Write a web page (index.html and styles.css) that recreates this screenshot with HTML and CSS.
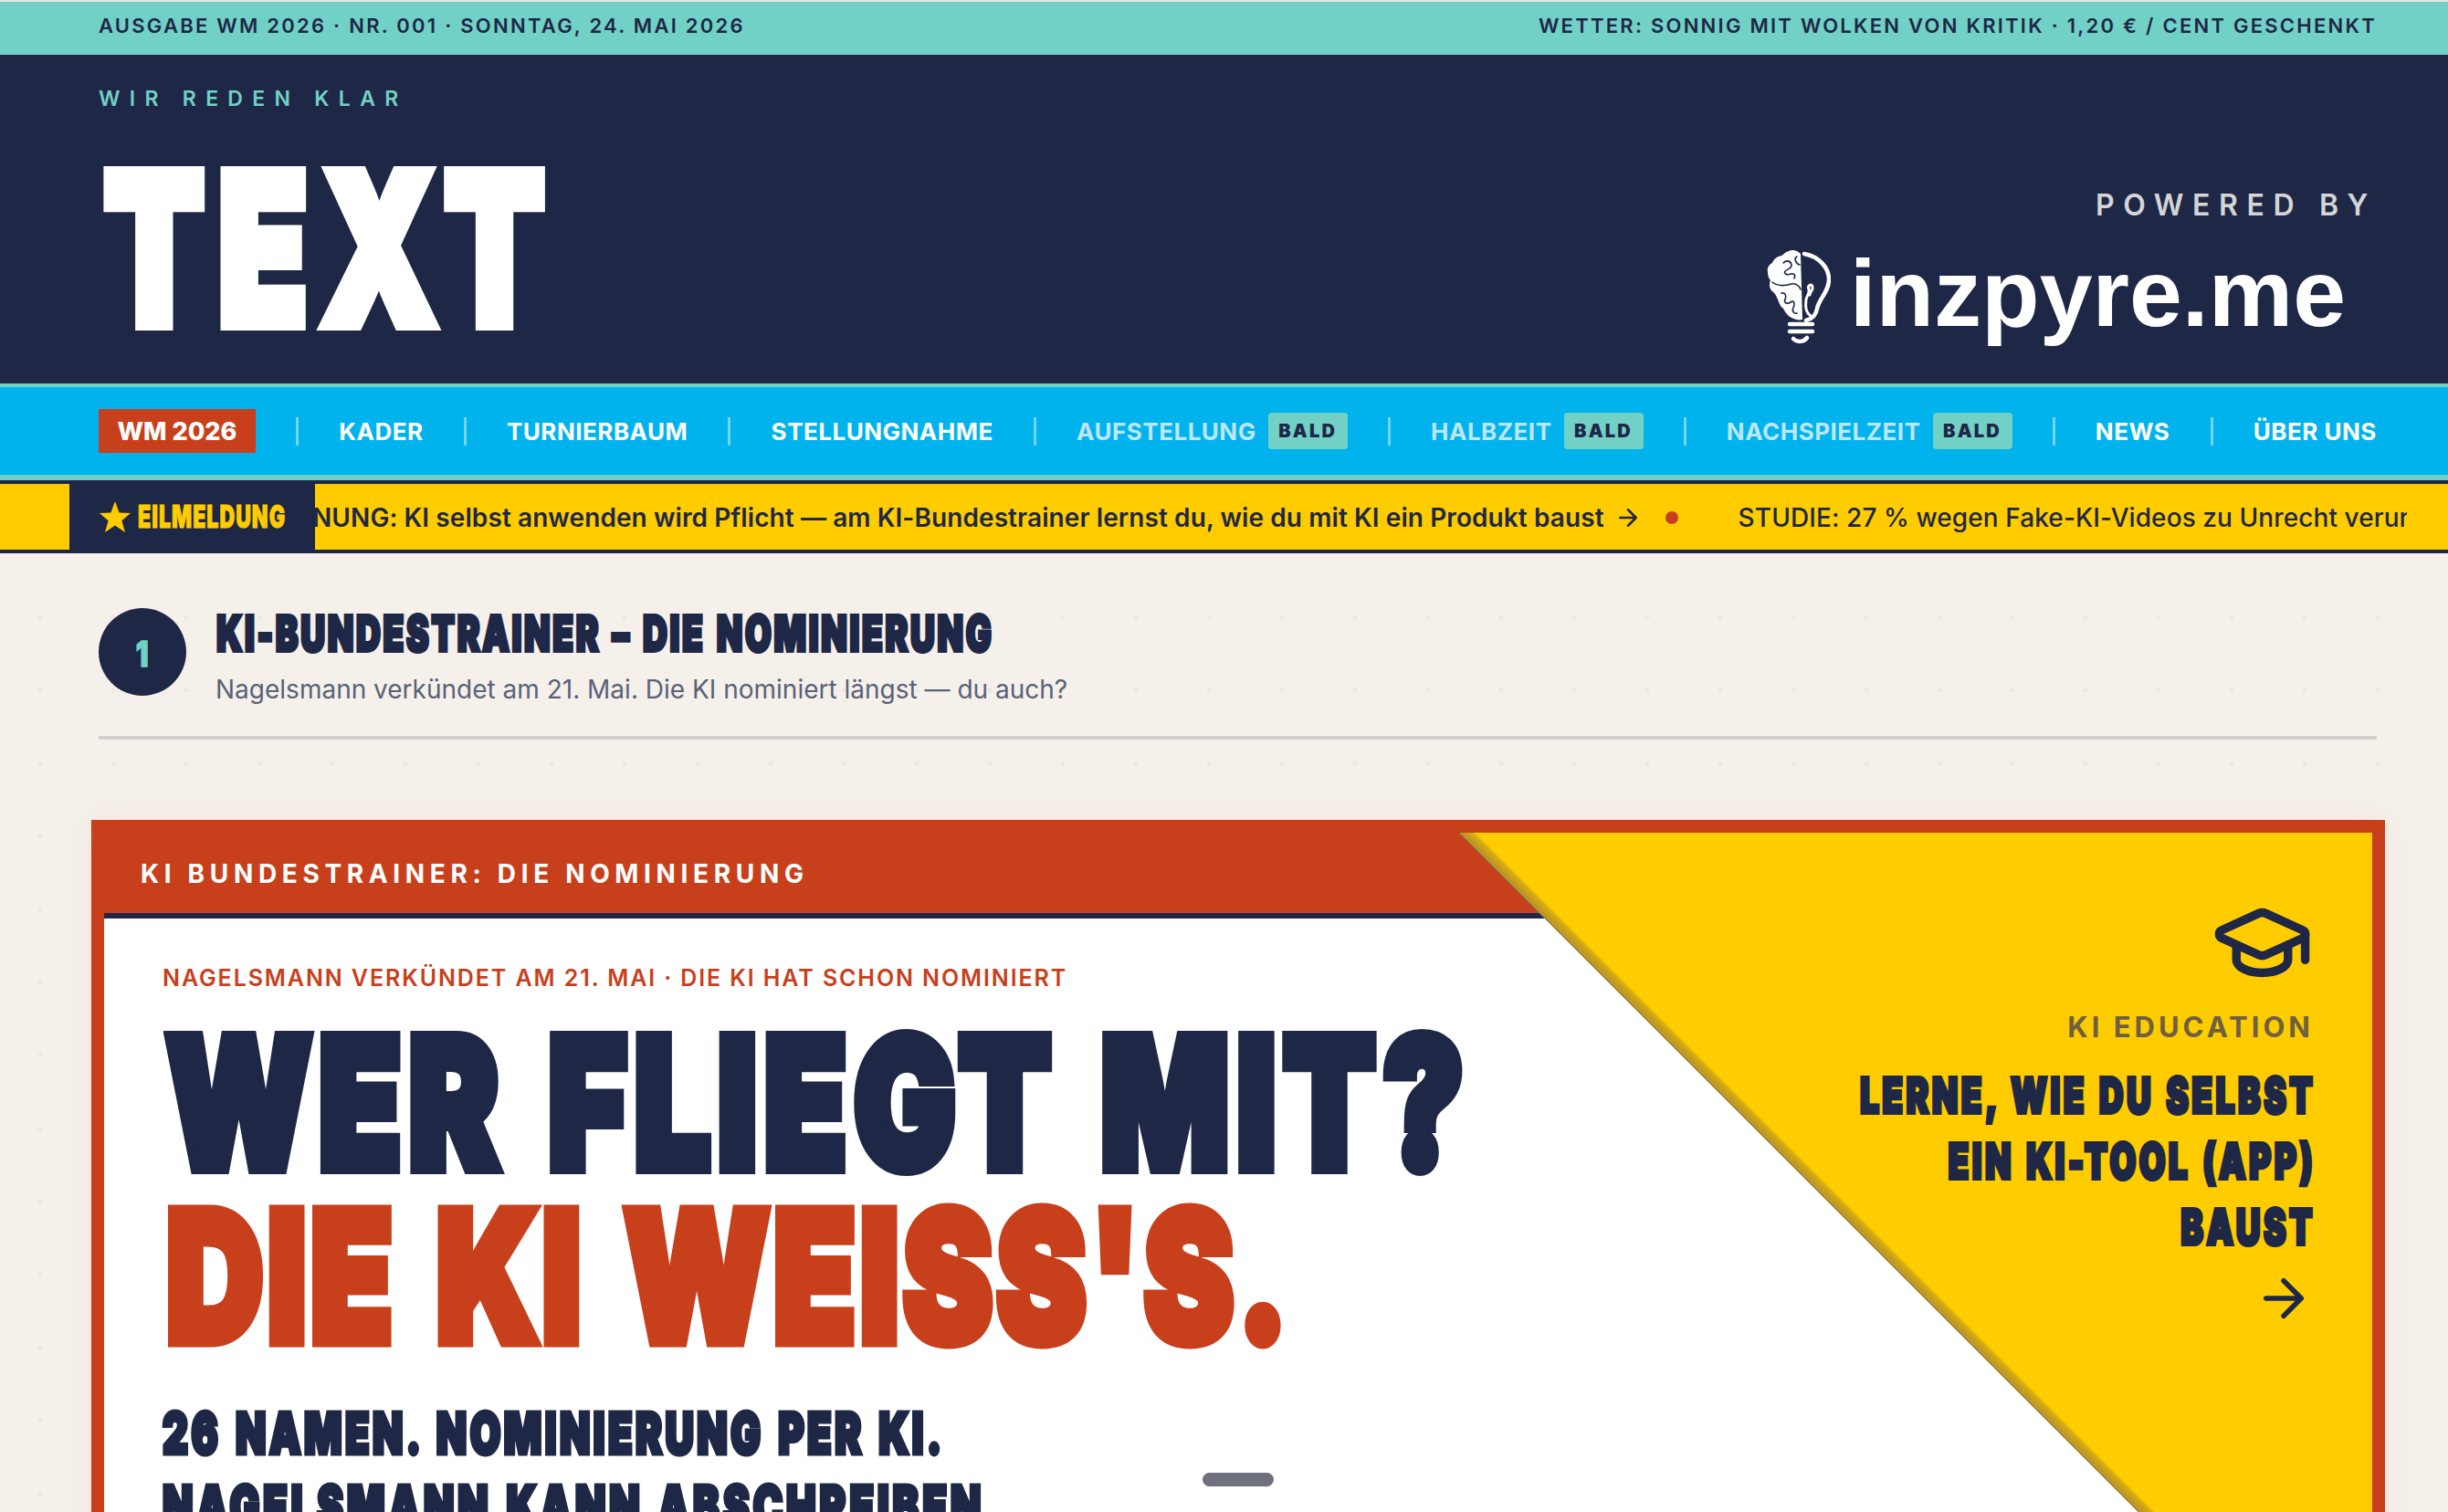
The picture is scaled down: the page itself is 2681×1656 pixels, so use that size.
FILE: index.html
```html
<!DOCTYPE html>
<html lang="de">
<head>
<meta charset="utf-8">
<title>TEXT – WM 2026</title>
<link rel="stylesheet" href="styles.css">
</head>
<body>
<div class="strip">
  <span>AUSGABE WM 2026 · NR. 001 · SONNTAG, 24. MAI 2026</span>
  <span>WETTER: SONNIG MIT WOLKEN VON KRITIK · 1,20 € / CENT GESCHENKT</span>
</div>
<header class="masthead">
  <div class="brand">
    <div class="tagline">WIR REDEN KLAR</div>
    <div class="logo cond">TEXT</div>
  </div>
  <div class="powered">
    <div class="powered-label">POWERED BY</div>
    <div class="powered-logo">
      <svg class="bulb" viewBox="0 0 70 104" width="70" height="104" aria-hidden="true">
        <path class="bulb-brain" d="M37 5C33 1 28 0 24 2C20 3 18 6 16 7C10 8 7 12 6 15C2 17 0 21 1 25C1 29 2 32 4 34C2 38 3 44 6 46C8 47 10 50 12 55C14 60 15 63 18 65C20 69 23 73 27 75C31 77 35 78 39 77Z"/>
        <g class="bulb-lines">
          <path d="M18 15C22 11 27 13 27 18C27 21 22 22 20 24C18 26 22 29 26 27C29 26 32 28 30 32"/>
          <path d="M6 36C12 41 20 40 27 38C31 37 36 40 37 44"/>
          <path d="M33 8C29 10 32 16 36 17"/>
          <path d="M16 48C20 47 22 51 20 55C18 58 22 61 26 58C30 55 31 60 29 64C27 68 30 71 33 70"/>
        </g>
        <path class="bulb-stroke" d="M41 5C58 8 68 21 68 33C68 47 57 54 55 65C54 72 50 76 43 78"/>
        <path class="bulb-stroke thin" d="M48 73C43 70 42 62 43 55C44 50 47 49 46 44C44 40 49 37 50 41C51 45 47 46 47 50"/>
        <path class="bulb-stroke" d="M25 82H50M25 90H50M29 98C33 102 40 102 44 97"/>
      </svg>
      <span class="powered-name">inzpyre.me</span>
    </div>
  </div>
</header>
<nav class="nav">
  <a class="nav-chip">WM 2026</a>
  <i class="sep"></i>
  <a class="nav-item">KADER</a>
  <i class="sep"></i>
  <a class="nav-item">TURNIERBAUM</a>
  <i class="sep"></i>
  <a class="nav-item">STELLUNGNAHME</a>
  <i class="sep"></i>
  <a class="nav-item muted">AUFSTELLUNG <b class="soon">BALD</b></a>
  <i class="sep"></i>
  <a class="nav-item muted">HALBZEIT <b class="soon">BALD</b></a>
  <i class="sep"></i>
  <a class="nav-item muted">NACHSPIELZEIT <b class="soon">BALD</b></a>
  <i class="sep"></i>
  <a class="nav-item">NEWS</a>
  <i class="sep"></i>
  <a class="nav-item">ÜBER UNS</a>
</nav>
<div class="ticker">
  <div class="ticker-label">
    <svg class="star" viewBox="0 0 36 36" width="36" height="36" aria-hidden="true"><path d="M18 1l4.6 12.4L35 14l-9.6 8.2L29 35 18 27.6 7 35l3.6-12.8L1 14l12.4-.6z"/></svg>
    <span class="cond ticker-word">EILMELDUNG</span>
  </div>
  <div class="ticker-track">
    <span class="ticker-main">NUNG: KI selbst anwenden wird Pflicht — am KI-Bundestrainer lernst du, wie du mit KI ein Produkt baust</span>
    <svg class="ticker-arrow" viewBox="0 0 24 24" aria-hidden="true"><path d="M5 12h14M12 5l7 7-7 7"/></svg>
    <i class="ticker-dot"></i>
    <span class="ticker-next">STUDIE: 27 % wegen Fake-KI-Videos zu Unrecht verurteilt</span>
  </div>
</div>
<main class="page">
  <section class="section-head">
    <div class="badge"><span class="cond badge-num">1</span></div>
    <div class="section-text">
      <h2 class="cond section-title">KI-BUNDESTRAINER – DIE NOMINIERUNG</h2>
      <p class="section-sub">Nagelsmann verkündet am 21. Mai. Die KI nominiert längst — du auch?</p>
    </div>
  </section>
  <article class="card">
    <div class="card-head">KI BUNDESTRAINER: DIE NOMINIERUNG</div>
    <div class="card-body">
      <div class="kicker">NAGELSMANN VERKÜNDET AM 21. MAI · DIE KI HAT SCHON NOMINIERT</div>
      <h1 class="hero">
        <span class="cond hero-line line-a">WER FLIEGT MIT?</span>
        <span class="cond hero-line line-b">DIE KI WEISS'S.</span>
      </h1>
      <p class="sub">
        <span class="cond sub-line sub-a">26 NAMEN. NOMINIERUNG PER KI.</span>
        <span class="cond sub-line sub-b">NAGELSMANN KANN ABSCHREIBEN</span>
      </p>
    </div>
    <aside class="corner">
      <svg class="cap" viewBox="0 0 24 24" aria-hidden="true">
        <path d="M21.42 10.922a1 1 0 0 0-.019-1.838L12.83 5.18a2 2 0 0 0-1.66 0L2.6 9.08a1 1 0 0 0 0 1.832l8.57 3.908a2 2 0 0 0 1.66 0z"/>
        <path d="M22 10v6"/>
        <path d="M6 12.5V16a6 3 0 0 0 12 0v-3.5"/>
      </svg>
      <div class="corner-label">KI EDUCATION</div>
      <div class="corner-title">
        <span class="cond corner-line">LERNE, WIE DU SELBST</span>
        <span class="cond corner-line">EIN KI-TOOL (APP)</span>
        <span class="cond corner-line">BAUST</span>
      </div>
      <svg class="corner-arrow" viewBox="0 0 24 24" aria-hidden="true"><path d="M5 12h14M12 5l7 7-7 7"/></svg>
    </aside>
  </article>
</main>
<div class="scroll-handle"></div>
</body>
</html>
```
FILE: styles.css
```css
* { box-sizing: border-box; }
html, body { margin: 0; padding: 0; }
body {
  width: 2681px;
  height: 1656px;
  overflow: hidden;
  background: #f5f0ea;
  color: #1e2746;
  font-family: "Inter", "Liberation Sans", sans-serif;
}
h1, h2, p { margin: 0; font: inherit; }

.cond {
  display: block;
  width: max-content;
  font-family: "Inter", "Liberation Sans", sans-serif;
  font-weight: 900;
  transform-origin: 0 0;
  white-space: nowrap;
}

/* top strip */
.strip {
  height: 60px;
  border-top: 2px solid #e5e5e0;
  background: #72d1c6;
  padding: 0 78px 6px 108px;
  display: flex;
  justify-content: space-between;
  align-items: center;
  font-size: 22px;
  font-weight: 600;
  letter-spacing: 2.25px;
}

/* masthead */
.masthead {
  height: 360px;
  background: #1e2746;
  padding: 0 78px 0 108px;
  display: flex;
  justify-content: space-between;
}
.tagline {
  margin-top: 34px;
  color: #72d1c6;
  font-size: 23px;
  line-height: 28px;
  font-weight: 600;
  letter-spacing: 10.3px;
}
.logo {
  margin-top: 50px;
  margin-left: 6px;
  color: #fff;
  font-size: 228px;
  line-height: 200px;
  letter-spacing: 22px;
  -webkit-text-stroke: 14px #fff;
  transform: scaleX(.7);
}
.powered {
  display: flex;
  flex-direction: column;
  align-items: flex-end;
}
.powered-label {
  margin-top: 146px;
  color: #d5d5d5;
  font-size: 32px;
  line-height: 38px;
  font-weight: 600;
  letter-spacing: 9.6px;
}
.powered-logo {
  margin-top: 25px;
  margin-right: 34px;
  display: flex;
  align-items: flex-start;
  gap: 21px;
}
.bulb { margin-top: 4px; }
.bulb-brain { fill: #fff; }
.bulb-lines { fill: none; stroke: #1e2746; stroke-width: 1.6; stroke-linecap: round; }
.bulb-stroke { fill: none; stroke: #fff; stroke-width: 4.5; stroke-linecap: round; }
.bulb-stroke.thin { stroke-width: 3; }
.powered-name {
  font-family: "Liberation Sans", sans-serif;
  font-size: 104px;
  line-height: 104px;
  font-weight: 700;
  color: #fff;
}

/* nav */
.nav {
  height: 106px;
  border-top: 4px solid #72d1c6;
  border-bottom: 6px solid #72d1c6;
  background: #00b3ec;
  padding: 0 78px 0 108px;
  display: flex;
  justify-content: space-between;
  align-items: center;
}
.nav-chip {
  width: 172px;
  height: 48px;
  background: #c83f1c;
  color: #fff;
  display: flex;
  align-items: center;
  justify-content: center;
  font-size: 27px;
  font-weight: 800;
}
.nav-item {
  display: flex;
  align-items: center;
  gap: 13px;
  color: #fff;
  font-size: 26px;
  font-weight: 700;
  letter-spacing: .5px;
}
.nav-item.muted { color: #bde6f8; }
.sep {
  width: 3px;
  height: 31px;
  background: rgba(255, 255, 255, .45);
}
.soon {
  width: 87px;
  height: 40px;
  border-radius: 4px;
  background: #72d1c6;
  color: #1e2746;
  display: flex;
  align-items: center;
  justify-content: center;
  font-size: 20px;
  font-weight: 900;
  letter-spacing: 2.2px;
}

/* ticker */
.ticker {
  height: 80px;
  border-top: 4px solid #1e2746;
  border-bottom: 4px solid #1e2746;
  background: #ffcc00;
  padding: 0 45px 0 76px;
  display: flex;
}
.ticker-label {
  width: 269px;
  flex: none;
  background: #1e2746;
  color: #ffcc00;
  padding-left: 32px;
  display: flex;
  align-items: center;
  gap: 7px;
}
.star { fill: #ffcc00; flex: none; }
.ticker-word {
  font-size: 34px;
  line-height: 40px;
  letter-spacing: 1.5px;
  -webkit-text-stroke: 1px #ffcc00;
  transform: scaleX(.68);
}
.ticker-track {
  flex: 1;
  overflow: hidden;
  padding-top: 2px;
  display: flex;
  align-items: center;
  white-space: nowrap;
  font-size: 28px;
  letter-spacing: .085px;
}
.ticker-main { font-weight: 600; flex: none; margin-left: -3px; }
.ticker-arrow {
  width: 30px;
  height: 30px;
  flex: none;
  margin-left: 11px;
  fill: none;
  stroke: #1e2746;
  stroke-width: 2;
  stroke-linecap: round;
  stroke-linejoin: round;
}
.ticker-dot {
  width: 14px;
  height: 14px;
  flex: none;
  margin-left: 26px;
  border-radius: 50%;
  background: #c83f1c;
}
.ticker-next { font-weight: 500; flex: none; margin-left: 66px; }

/* page */
.page {
  height: 1050px;
  overflow: hidden;
  background-image: radial-gradient(circle, #ede8e1 2px, transparent 3px);
  background-size: 80px 80px;
  background-position: 4px 30px;
}
.section-head {
  margin: 0 78px 0 108px;
  padding: 60px 0 44px;
  border-bottom: 4px solid #d2d0cc;
  display: flex;
  gap: 32px;
}
.section-text { height: 96px; }
.badge {
  width: 96px;
  height: 96px;
  flex: none;
  border-radius: 50%;
  background: #1e2746;
  color: #72d1c6;
  display: flex;
  align-items: center;
  justify-content: center;
}
.badge-num {
  font-size: 38px;
  line-height: 46px;
  -webkit-text-stroke: 1.5px #72d1c6;
  transform-origin: 50% 50%;
  transform: translateY(2px) scaleX(.8);
}
.section-title {
  margin-left: 1px;
  font-size: 53px;
  line-height: 56px;
  letter-spacing: 3.9px;
  word-spacing: 3px;
  -webkit-text-stroke: 4px #1e2746;
  transform: scaleX(.7);
}
.section-sub {
  margin-top: 15px;
  color: #5a6278;
  font-size: 28px;
  line-height: 36px;
}

/* card */
.card {
  position: relative;
  margin-top: 88px;
  margin-left: 100px;
  width: 2512px;
  height: 900px;
  border: 14px solid #c83f1c;
  background: #fff;
  box-shadow: 0 0 40px rgba(200, 63, 28, .06);
  overflow: hidden;
}
.card-head {
  height: 94px;
  background: #c83f1c;
  border-bottom: 6px solid #1e2746;
  padding: 2px 40px 0;
  color: #fff;
  display: flex;
  align-items: center;
  font-size: 28px;
  font-weight: 700;
  letter-spacing: 5.65px;
}
.card-body { padding: 50px 0 0 64px; }
.kicker {
  color: #c83f1c;
  font-size: 25px;
  line-height: 30px;
  font-weight: 600;
  letter-spacing: 1.9px;
}
.hero { margin-top: 27px; }
.hero-line {
  margin-left: 4px;
  font-size: 196px;
  line-height: 190px;
  word-spacing: 12px;
  transform: scaleX(.75);
  text-shadow: 6px 4px 0 rgba(30, 39, 70, .1);
}
.line-a { letter-spacing: 11px; -webkit-text-stroke: 14px #1e2746; color: #1e2746; }
.line-b { letter-spacing: 6px; -webkit-text-stroke: 13px #c83f1c; color: #c83f1c; }
.sub { margin-top: 37px; }
.sub-line {
  font-size: 62px;
  line-height: 80px;
  word-spacing: 5px;
  -webkit-text-stroke: 5px #1e2746;
  transform: scaleX(.7);
}
.sub-a { letter-spacing: 5px; }
.sub-b { letter-spacing: 5.6px; }

/* yellow corner */
.corner {
  position: absolute;
  top: 0;
  right: 0;
  width: 1000px;
  height: 1000px;
  background: linear-gradient(45deg, transparent 707px, #8f8040 707px, #b8962a 708.5px, #c69c20 712px, #dcb010 718px, #ffcc00 720px);
  padding: 64px 64px 0 0;
  display: flex;
  flex-direction: column;
  align-items: flex-end;
}
.cap {
  width: 113px;
  height: 113px;
  fill: none;
  stroke: #1e2746;
  stroke-width: 2;
  stroke-linecap: round;
  stroke-linejoin: round;
}
.corner-label {
  margin-top: 17px;
  color: #6e6040;
  font-size: 31px;
  line-height: 38px;
  font-weight: 700;
  letter-spacing: 4px;
}
.corner-title {
  margin-top: 20px;
  margin-right: -2px;
  display: flex;
  flex-direction: column;
  align-items: flex-end;
}
.corner-line {
  font-size: 53px;
  line-height: 72px;
  letter-spacing: 4.9px;
  word-spacing: 3px;
  -webkit-text-stroke: 4px #1e2746;
  transform-origin: 100% 0;
  transform: scaleX(.7);
}
.corner-arrow {
  margin-top: 9px;
  width: 66px;
  height: 66px;
  fill: none;
  stroke: #1e2746;
  stroke-width: 2;
  stroke-linecap: round;
  stroke-linejoin: round;
}

.scroll-handle {
  position: fixed;
  left: 1317px;
  top: 1613px;
  width: 78px;
  height: 15px;
  border-radius: 8px;
  background: #6f717c;
}
```
